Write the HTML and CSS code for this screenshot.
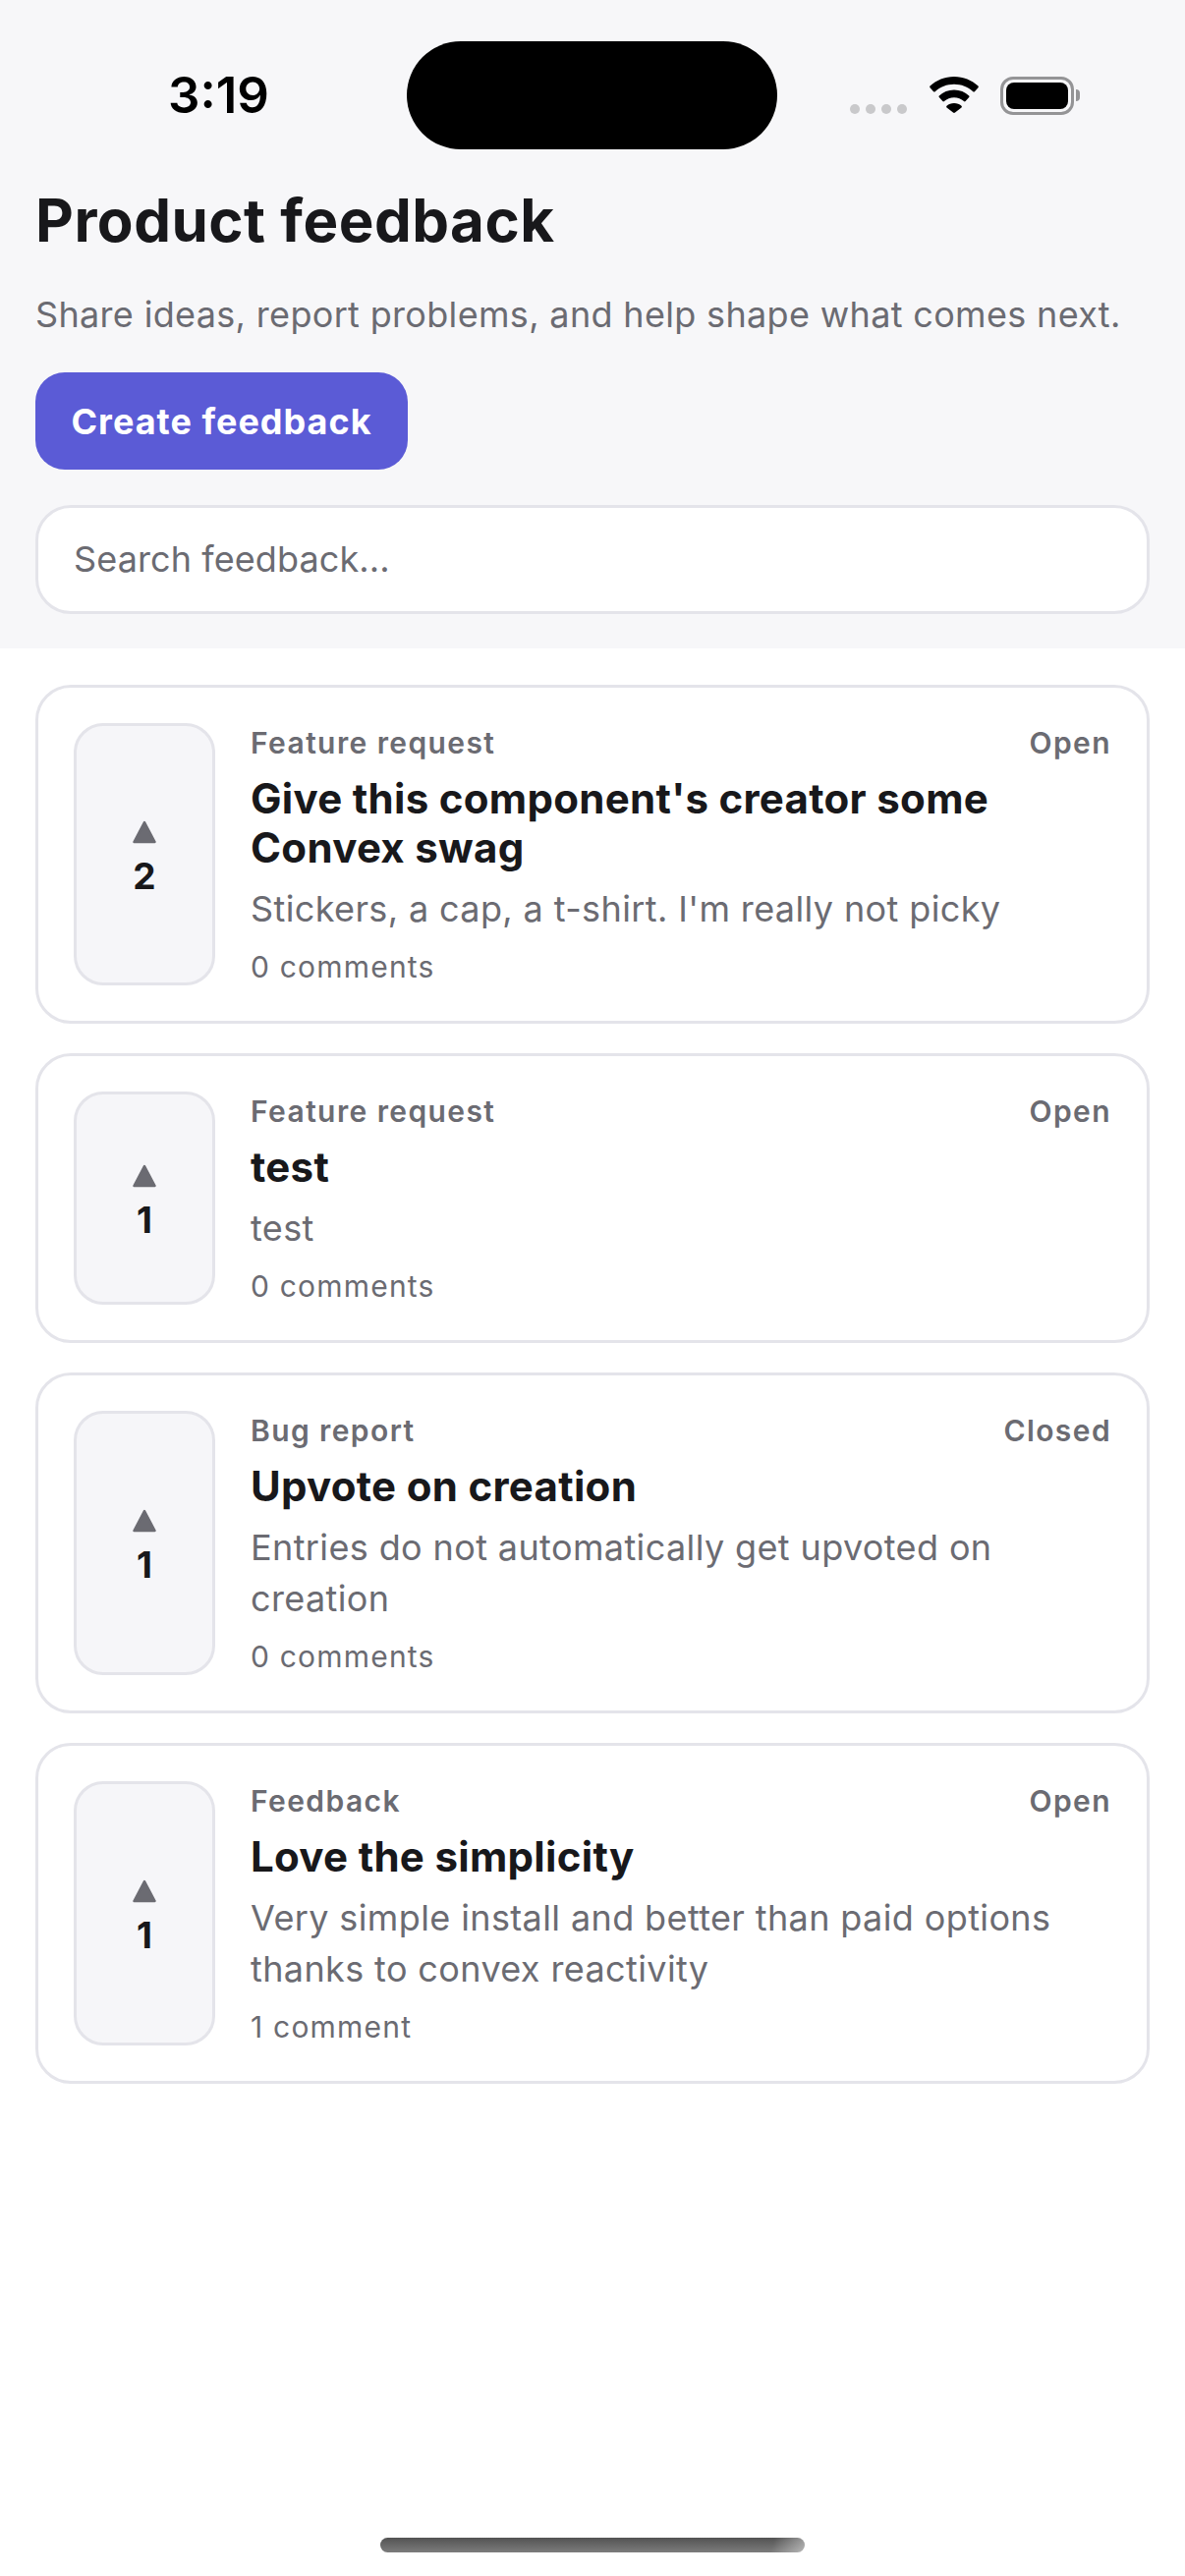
FILE: index.html
```html
<!DOCTYPE html>
<html lang="en">
<head>
<meta charset="utf-8">
<title>Product feedback</title>
<link rel="stylesheet" href="styles.css">
</head>
<body>
<div class="page">
  <header class="header">
    <div class="status">
      <span class="time">3:19</span>
      <div class="island"></div>
      <div class="status-icons">
        <div class="dots"><i></i><i></i><i></i><i></i></div>
        <svg class="wifi" width="50" height="37" viewBox="0 0 50 37"><path d="M25 0C15.5 0 7 3.6 0.5 9.6c-.5.5-.5 1.1 0 1.6l3.6 4c.5.5 1.1.5 1.6.1C10.900 10.500 17.600 7.800 25 7.800s14.100 2.700 19.300 7.500c.5.4 1.100.4 1.600-.1l3.600-4c.5-.5.5-1.100 0-1.600C43 3.600 34.500 0 25 0Z"/><path d="M25 13.500c-5.900 0-11.200 2.200-15.200 5.900-.5.5-.5 1.100 0 1.600l3.600 4c.5.500 1.100.5 1.600.1C17.700 22.700 21.200 21.300 25 21.300s7.300 1.400 10 3.800c.5.4 1.100.4 1.600-.1l3.600-4c.5-.5.5-1.100 0-1.600C36.200 15.700 30.900 13.500 25 13.500Z"/><path d="M25 27c-2.900 0-5.500 1-7.500 2.800-.5.5-.5 1.100 0 1.600l6.500 5.200c.6.5 1.400.5 2 0l6.500-5.200c.5-.5.5-1.100 0-1.600C30.500 28 27.900 27 25 27Z"/></svg>
        <div class="battery"><div class="battery-shell"><div class="battery-fill"></div></div><div class="battery-nub"></div></div>
      </div>
    </div>
    <h1 class="page-title">Product feedback</h1>
    <p class="page-sub">Share ideas, report problems, and help shape what comes next.</p>
    <button class="create">Create feedback</button>
    <div class="search">Search feedback...</div>
  </header>
  <main class="list">
    <article class="card">
      <div class="vote"><svg class="tri" width="24" height="24" viewBox="0 0 24 24"><path d="M12 2 22.500 22H1.500Z"/></svg><span class="count">2</span></div>
      <div class="body">
        <div class="meta"><span>Feature request</span><span>Open</span></div>
        <h2 class="title">Give this component's creator some Convex swag</h2>
        <p class="desc">Stickers, a cap, a t-shirt. I'm really not picky</p>
        <div class="comments">0 comments</div>
      </div>
    </article>
    <article class="card">
      <div class="vote"><svg class="tri" width="24" height="24" viewBox="0 0 24 24"><path d="M12 2 22.500 22H1.500Z"/></svg><span class="count">1</span></div>
      <div class="body">
        <div class="meta"><span>Feature request</span><span>Open</span></div>
        <h2 class="title">test</h2>
        <p class="desc">test</p>
        <div class="comments">0 comments</div>
      </div>
    </article>
    <article class="card">
      <div class="vote"><svg class="tri" width="24" height="24" viewBox="0 0 24 24"><path d="M12 2 22.500 22H1.500Z"/></svg><span class="count">1</span></div>
      <div class="body">
        <div class="meta"><span>Bug report</span><span>Closed</span></div>
        <h2 class="title">Upvote on creation</h2>
        <p class="desc">Entries do not automatically get upvoted on creation</p>
        <div class="comments">0 comments</div>
      </div>
    </article>
    <article class="card">
      <div class="vote"><svg class="tri" width="24" height="24" viewBox="0 0 24 24"><path d="M12 2 22.500 22H1.500Z"/></svg><span class="count">1</span></div>
      <div class="body">
        <div class="meta"><span>Feedback</span><span>Open</span></div>
        <h2 class="title">Love the simplicity</h2>
        <p class="desc">Very simple install and better than paid options thanks to convex reactivity</p>
        <div class="comments">1 comment</div>
      </div>
    </article>
  </main>
  <div class="home"></div>
</div>
</body>
</html>
```
FILE: styles.css
```css
* { box-sizing: border-box; }
html, body { margin: 0; padding: 0; }
body { background: #fff; font-family: Inter, "Liberation Sans", sans-serif; font-optical-sizing: none; color: #18181b; }
.page { width: 1206px; height: 2622px; display: flex; flex-direction: column; overflow: hidden; }

.header { background: #f7f7f9; padding: 42px 36px 35px; height: 660px; }
.status { height: 110px; display: flex; align-items: center; position: relative; }
.time { width: 378px; padding-left: 135px; font-size: 51px; font-weight: 600; color: #000; line-height: 60px; }
.island { width: 377px; height: 110px; border-radius: 55px; background: #000; }
.status-icons { flex: 1; display: flex; align-items: flex-start; padding-left: 74px; height: 39px; }
.dots { display: flex; gap: 6px; margin-top: 28px; }
.dots i { width: 10px; height: 10px; border-radius: 5px; background: #c9c9cb; display: block; }
.wifi { margin-left: 23px; display: block; fill: #000; }
.battery { margin-left: 22px; display: flex; align-items: center; }
.battery-shell { width: 75px; height: 39px; border: 3.500px solid #949496; border-radius: 13px; padding: 3px; }
.battery-fill { width: 100%; height: 100%; background: #000; border-radius: 8px; }
.battery-nub { width: 4px; height: 12px; background: #949496; border-radius: 0 6px 6px 0; margin-left: 2px; }

.page-title { margin: 36px 0 0; font-size: 60px; line-height: 72px; font-weight: 700; letter-spacing: 0.5px; color: #18181b; }
.page-sub { margin: 33px 0 0; font-size: 36px; line-height: 54px; letter-spacing: 0.33px; color: #6b6b72; }
.create { display: block; margin-top: 32px; width: 379px; height: 99px; border: 0; border-radius: 30px; background: #5b5bd6; color: #fff; font: 700 36px/48px Inter, "Liberation Sans", sans-serif; font-optical-sizing: none; letter-spacing: 1px; padding: 0; }
.search { margin-top: 36px; height: 111px; border: 3px solid #e4e4ea; border-radius: 36px; background: #fff; padding: 0 36px 2px; display: flex; align-items: center; font-size: 36px; letter-spacing: 0.1px; color: #6b6b72; }

.list { flex: 1; padding: 37px 36px 0; display: flex; flex-direction: column; gap: 30px; }
.card { display: flex; gap: 36px; border: 3px solid #e4e4ea; border-radius: 36px; padding: 36px; background: #fff; }
.vote { width: 144px; flex: none; border: 3px solid #e4e4ea; border-radius: 30px; background: #f6f6f9; display: flex; flex-direction: column; align-items: center; justify-content: center; gap: 12px; padding-top: 8px; }
.tri { display: block; fill: #6b6b72; stroke: #6b6b72; stroke-width: 2.500px; stroke-linejoin: round; }
.count { font-size: 37px; line-height: 42px; font-weight: 700; color: #18181b; }
.body { flex: 1; min-width: 0; display: flex; flex-direction: column; }
.meta { display: flex; justify-content: space-between; font-size: 30px; line-height: 40px; font-weight: 600; letter-spacing: 1.4px; color: #6b6b72; }
.title { margin: 12px 0 0; font-size: 42px; line-height: 50px; font-weight: 700; letter-spacing: 0.3px; color: #18181b; }
.desc { margin: 11px 0 0; font-size: 36px; line-height: 52px; letter-spacing: 0.38px; color: #6b6b72; }
.comments { margin-top: 15px; font-size: 30px; line-height: 37px; letter-spacing: 1.2px; color: #6b6b72; }

.home { flex: none; width: 432px; height: 15px; margin: 0 auto 24px; border-radius: 8px; background: linear-gradient(105deg, rgba(255,255,255,0) 92%, rgba(255,255,255,.45) 100%), linear-gradient(#535353, #7c7c7c); }
```
